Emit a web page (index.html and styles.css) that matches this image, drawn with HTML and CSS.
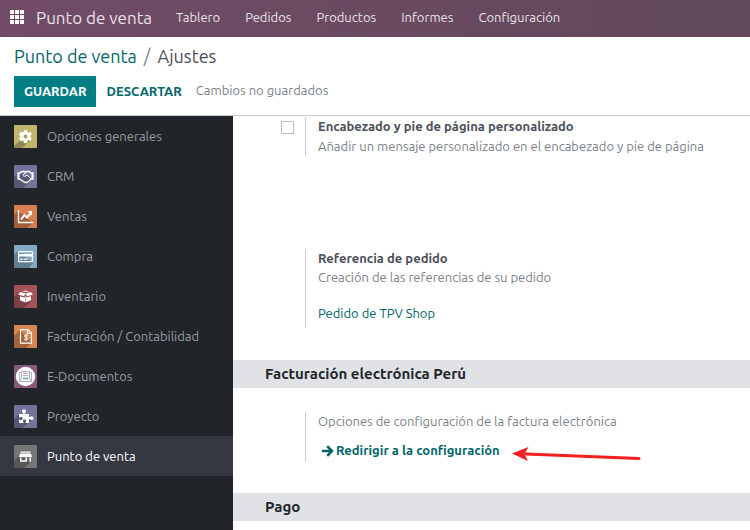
FILE: index.html
```html
<!DOCTYPE html>
<html lang="es">
<head>
<meta charset="utf-8">
<meta name="viewport" content="width=device-width, initial-scale=1">
<title>Ajustes - Punto de venta</title>
<link rel="stylesheet" href="styles.css">
</head>
<body>
<nav class="navbar">
  <button class="apps" type="button" aria-label="Aplicaciones">
    <svg width="14" height="14" viewBox="0 0 14 14" fill="#fff" shape-rendering="crispEdges"><path d="M0 0h4v4H0zM5 0h4v4H5zM10 0h4v4h-4zM0 5h4v4H0zM5 5h4v4H5zM10 5h4v4h-4zM0 10h4v4H0zM5 10h4v4H5zM10 10h4v4h-4z"/></svg>
  </button>
  <a class="brand" href="#">Punto de venta</a>
  <a class="nav-link" href="#">Tablero</a>
  <a class="nav-link" href="#">Pedidos</a>
  <a class="nav-link" href="#">Productos</a>
  <a class="nav-link" href="#">Informes</a>
  <a class="nav-link" href="#">Configuración</a>
</nav>

<header class="control-panel">
  <div class="breadcrumb"><a href="#">Punto de venta</a><span class="slash">/</span><span>Ajustes</span></div>
  <div class="actions">
    <button class="btn primary" type="button">GUARDAR</button>
    <button class="btn plain" type="button">DESCARTAR</button>
    <span class="status">Cambios no guardados</span>
  </div>
</header>

<div class="body">
  <aside class="sidebar">
    <a class="tab" href="#">
      <svg class="icon olive" viewBox="0 0 23 23"><path class="shade" d="M7 15 0 21v2h8l9-8z"/><g fill="#fff"><circle cx="11.500" cy="11.500" r="4.900"/><path d="M10 5h3l.4 13h-3.800z"/><path d="M10 5h3l.4 13h-3.800z" transform="rotate(60 11.500 11.500)"/><path d="M10 5h3l.4 13h-3.800z" transform="rotate(120 11.500 11.500)"/></g><circle cx="11.500" cy="11.500" r="1.900" fill="#aaa15b"/></svg>
      <span>Opciones generales</span></a>
    <a class="tab" href="#">
      <svg class="icon violet" viewBox="0 0 23 23"><path class="shade" d="M4 8 0 12v11h9l10-9z"/><path d="M4 8h2l2-1.500h2.500l1 1 1-1H15L17 8h2v6h-1.500L13 17.500h-2L5.500 14H4z" fill="none" stroke="#fff" stroke-width="1.300"/><path d="m11.500 7.500-2.500 3 1.500 1 2.500-1.500 4 4" fill="none" stroke="#fff"/><path d="M4 8h1.500v6H4zM17.500 8H19v6h-1.500z" fill="#fff"/></svg>
      <span>CRM</span></a>
    <a class="tab" href="#">
      <svg class="icon orange" viewBox="0 0 23 23"><path class="shade" d="M4 6 0 10v13h13l6-5z"/><path d="M4.500 5v12.500H19" fill="none" stroke="#fff" stroke-width="1.400"/><path d="M7 14.500 10.500 10l2.500 2.500L17 8" fill="none" stroke="#fff" stroke-width="2"/><path d="M13.500 6H18v4.500z" fill="#fff"/></svg>
      <span>Ventas</span></a>
    <a class="tab" href="#">
      <svg class="icon blue" viewBox="0 0 23 23"><path class="shade" d="M4 6 0 10v13h15l4-5z"/><rect x="4.600" y="6.600" width="13.800" height="10" rx=".6" fill="none" stroke="#fff" stroke-width="1.200"/><path d="M4 9h15v2.500H4zM6 13.500h2.500v1.200H6zM9.500 13.500h4v1.200h-4z" fill="#fff"/></svg>
      <span>Compra</span></a>
    <a class="tab" href="#">
      <svg class="icon red" viewBox="0 0 23 23"><path class="shade" d="M4 8 0 12v11h10l8-7z"/><g fill="#fff"><path d="m6.500 7 5 1.600L10 11.300 4 9.500zM16.500 7l-5 1.600 1.500 2.700 6-1.800zM6 11.200l4.300 1.300 1-1.500v6.500L6 15.300zM17 11.200l-4.300 1.300-1-1.500v6.500l5.300-2.200z"/><path d="m8 6.200 3.500-1 3.500 1-3.500 1z" opacity=".7"/></g></svg>
      <span>Inventario</span></a>
    <a class="tab" href="#">
      <svg class="icon amber" viewBox="0 0 23 23"><path class="shade" d="M6 5 0 11v12h12l6-5z"/><path d="M6.500 4.700h7.300l3.700 3.600v9.800h-11zM13.500 5v3.500h3.700" fill="none" stroke="#fff" stroke-width="1.200"/><path d="M13.700 10.700c-1-.8-3.300-.7-3.300.6 0 1.500 3.300.8 3.300 2.300 0 1.400-2.400 1.500-3.500.6M12 9v7" fill="none" stroke="#fff"/></svg>
      <span>Facturación / Contabilidad</span></a>
    <a class="tab" href="#">
      <svg class="icon plum" viewBox="0 0 23 23"><circle cx="11.500" cy="11.500" r="9.700" fill="#fff"/><g fill="none" stroke="#a9a6ae" stroke-width=".9"><path d="M7.500 13V6.500h8V13M9 8.500h5M9 10.500h5M7.500 7.500H5.500v9h12v-9h-2M5.500 16.500l2-3.500M17.500 16.500l-2-3.500"/><path d="M9 13.500h5.500" stroke="#55a5d4" stroke-width="1.300"/><path d="M9.500 7h3" stroke="#d99aaa"/></g></svg>
      <span>E-Documentos</span></a>
    <a class="tab" href="#">
      <svg class="icon violet" viewBox="0 0 23 23"><path class="shade" d="M5 9 0 14v9h8l10-8z"/><path d="M5 9h4c.5-1-1-1.500-1-2.800C8 5 8.900 4.300 10 4.300s2 .7 2 1.900C12 7.500 10.700 8 11 9h4v3.200c1 .4 1.700-.9 2.800-.9 1 0 1.700.8 1.700 1.900s-.7 1.900-1.700 1.900c-1.100 0-1.800-1.300-2.800-.9V18h-3.500c-.5-1 .6-1.300.6-2.300 0-.8-.7-1.300-1.600-1.300s-1.600.5-1.600 1.300c0 1 1.100 1.300.6 2.300H5v-3c.4-1 1.400.2 2.200.1.900 0 1.400-.7 1.400-1.500s-.6-1.500-1.400-1.500c-.8 0-1.700 1.100-2.200.2z" fill="#fff"/></svg>
      <span>Proyecto</span></a>
    <a class="tab active" href="#">
      <svg class="icon gray" viewBox="0 0 23 23"><path class="shade" d="M5 11 0 16v7h10l7-6z"/><path d="M6.500 6.500h10v1.300h-10zM6 8.500h11l1 3.500H5zM6 12.500h1.500v2.700h4v-2.700H13v4.300H6zM15.500 12.500H17v4.300h-1.500z" fill="#fff"/></svg>
      <span>Punto de venta</span></a>
  </aside>

  <main class="settings">
    <section class="group">
      <div class="setting header-footer">
        <input class="check" type="checkbox" id="header-footer">
        <div class="pane">
          <label class="title" for="header-footer">Encabezado y pie de página personalizado</label>
          <p>Añadir un mensaje personalizado en el encabezado y pie de página</p>
        </div>
      </div>
      <div class="setting">
        <div class="pane">
          <strong class="title">Referencia de pedido</strong>
          <p>Creación de las referencias de su pedido</p>
          <a class="sequence" href="#">Pedido de TPV Shop</a>
        </div>
      </div>
    </section>

    <h2>Facturación electrónica Perú</h2>
    <section class="group invoicing">
      <div class="setting">
        <div class="pane">
          <p>Opciones de configuración de la factura electrónica</p>
          <div class="redirect-row">
            <a class="redirect" href="#"><svg width="12" height="12" viewBox="0 0 12 12" fill="none" stroke="currentColor" stroke-width="2.600"><path d="M0 6h10M5.200 1.200 10 6l-4.800 4.800"/></svg>Redirigir a la configuración</a>
            <svg class="pointer" width="130" height="14" viewBox="0 0 130 14"><path d="m14 7 113 4.500" stroke="#f5201f" stroke-width="3" stroke-linecap="round"/><path d="M0 6.500 16.500 0l-4 7 3.500 7z" fill="#f5201f"/></svg>
          </div>
        </div>
      </div>
    </section>

    <h2>Pago</h2>
  </main>
</div>
</body>
</html>
```
FILE: styles.css
```css
* { box-sizing: border-box; }

body {
  display: flex;
  flex-direction: column;
  height: 100vh;
  margin: 0;
  overflow: hidden;
  background: #fff;
  color: #7c7f89;
  font: 13px/19px Ubuntu, "Noto Sans", sans-serif;
}

a { color: #01666b; text-decoration: none; }
button { border: 0; background: none; font: inherit; cursor: pointer; }
p { margin: 0; }

.navbar {
  display: flex;
  flex: none;
  align-items: center;
  gap: 25px;
  height: 37px;
  padding: 0 10px 3px;
  background: linear-gradient(90deg, #714b67, #62495b);
  white-space: nowrap;
}
.navbar a { color: #e9e2e7; }
.apps { display: flex; padding: 0; }
.navbar .brand { margin: 0 -1px 0 -13px; font-size: 17px; }

.control-panel {
  flex: none;
  height: 79px;
  padding: 7px 14px 0;
  border-bottom: 1px solid #c9ccd2;
}
.breadcrumb {
  color: #4c4f59;
  font-size: 18px;
  line-height: 24px;
}
.slash { margin: 0 7px; color: #7c7f89; }
.actions { display: flex; align-items: center; gap: 10px; margin-top: 8px; }
.btn { height: 31px; padding: 0; font-weight: 600; }
.primary { padding: 0 10px; background: #017e84; color: #fff; }
.plain { color: #01666b; }
.status { margin-left: 4px; padding-bottom: 3px; }

.body { display: flex; flex: 1; min-height: 0; }

.sidebar { flex: none; width: 233px; background: #212529; }
.tab {
  display: flex;
  align-items: center;
  gap: 10px;
  height: 40px;
  padding: 0 14px;
  color: #999ca2;
  white-space: nowrap;
}
.tab.active { background: #353741; color: #fff; }
.icon { width: 23px; height: 23px; border-radius: 1px; }
.shade { fill: #000; opacity: 0.25; }
.olive { background: #bfb66c; }
.violet { background: #73749b; }
.orange { background: #d77e50; }
.blue { background: #80abc3; }
.red { background: #a55358; }
.amber { background: #d98650; }
.plum { background: #875a7b; }
.gray { background: #747673; }

.settings { flex: 1; min-width: 0; overflow: hidden; }
.group { padding: 1px 0 32px; }
.invoicing { padding-top: 24px; }
.setting { position: relative; padding-left: 72px; }
.header-footer { margin-bottom: 93px; }
.pane { padding-left: 12px; border-left: 1px solid #c9ccd2; }
.title { display: block; color: #4c4f59; font-weight: 600; }
.header-footer p { line-height: 20px; }
.check {
  position: absolute;
  top: 4px;
  left: 48px;
  appearance: none;
  width: 13px;
  height: 13px;
  margin: 0;
  border: 1px solid #b9bcc2;
  background: #fff;
}
.sequence { display: block; padding: 17px 0 5px; }

h2 {
  margin: 0;
  padding-left: 32px;
  background: #e0e2e6;
  color: #212529;
  font-size: 15px;
  font-weight: 600;
  line-height: 28px;
}

.redirect-row { display: flex; align-items: flex-start; gap: 12px; padding: 10px 0 0 4px; }
.redirect { display: flex; align-items: center; gap: 2px; font-weight: 600; white-space: nowrap; }
.pointer { flex: none; margin-top: 6px; }
```
